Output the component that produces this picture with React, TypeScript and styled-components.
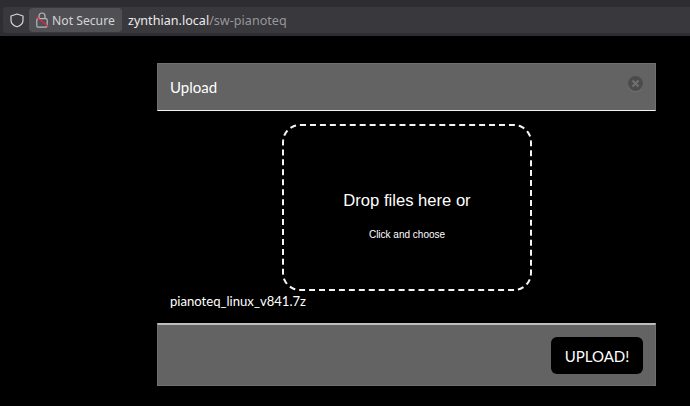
import { createGlobalStyle } from "styled-components";
import styled from "styled-components";

const GlobalStyle = createGlobalStyle`
  html, body {
    margin: 0;
    padding: 0;
    width: 690px;
    height: 406px;
    overflow: hidden;
    background: #000;
  }
`;

const Page = styled.div`
  width: 690px;
  height: 406px;
  display: flex;
  flex-direction: column;
  background: #000;
`;

const BrowserBar = styled.div`
  height: 36px;
  box-sizing: border-box;
  padding: 7px 0 3px 3px;
  background: #2e2d31;
  display: flex;
`;

const UrlBar = styled.div`
  flex: 1;
  display: flex;
  align-items: center;
  padding-left: 7px;
  background: #39383c;
  border-radius: 3px 0 0 3px;
  font-family: "Noto Sans", sans-serif;
  font-size: 12.6px;
`;

const SecurityBadge = styled.div`
  width: 93px;
  height: 24px;
  box-sizing: border-box;
  margin: 0 6px 0 4px;
  display: flex;
  align-items: center;
  padding-left: 7px;
  background: #505054;
  border-radius: 4px;
  color: #d4d4d6;
  font-size: 12.2px;
`;

const Host = styled.span`
  color: #ecebed;
`;

const Path = styled.span`
  color: #97969b;
`;

const Modal = styled.div`
  width: 499px;
  margin: 27px 0 0 157px;
  display: flex;
  flex-direction: column;
  font-family: Lato, sans-serif;
  color: #fff;
`;

const Header = styled.div`
  height: 48px;
  box-sizing: border-box;
  padding: 0 12px;
  display: flex;
  align-items: center;
  justify-content: space-between;
  background: #636363;
  border-top: 1px solid #707070;
  border-left: 1px solid #707070;
  border-right: 1px solid #707070;
  border-bottom: 1px solid #f2f2f2;
  font-size: 15px;
`;

const CloseButton = styled.div`
  width: 15px;
  height: 15px;
  margin: 0 0 8px;
  border-radius: 50%;
  background: #4b4b4b;
  box-shadow: 0 1px 0 #727272;
  display: flex;
  align-items: center;
  justify-content: center;
`;

const Body = styled.div`
  height: 212px;
  box-sizing: border-box;
  padding-top: 13px;
  display: flex;
  flex-direction: column;
`;

const DropZone = styled.div`
  width: 250px;
  height: 167px;
  box-sizing: border-box;
  margin-left: 125px;
  padding-top: 65px;
  border: 2px dashed #f4f4f4;
  border-radius: 18px;
  display: flex;
  flex-direction: column;
  align-items: center;
  font-family: "Liberation Sans", sans-serif;
`;

const DropTitle = styled.div`
  font-size: 16.6px;
  line-height: 20px;
`;

const DropHint = styled.div`
  margin-top: 17px;
  font-size: 10px;
  line-height: 14px;
`;

const FileName = styled.div`
  margin: 2px 0 0 13px;
  font-size: 13.1px;
  line-height: 16px;
`;

const Footer = styled.div`
  height: 63px;
  box-sizing: border-box;
  padding: 12px 12px 0 0;
  display: flex;
  justify-content: flex-end;
  align-items: flex-start;
  background: #636363;
  border-top: 2px solid #bdbdbd;
  border-left: 1px solid #707070;
  border-right: 1px solid #707070;
  border-bottom: 1px solid #707070;
`;

const UploadButton = styled.button`
  width: 92px;
  height: 37px;
  padding: 0;
  border: 0;
  border-radius: 6px;
  background: #000;
  color: #fff;
  font-family: Lato, sans-serif;
  font-size: 15px;
`;

function ShieldIcon() {
  return (
    <svg width="15" height="15" viewBox="0 0 15 15" fill="none">
      <path
        d="M7 1 13 3v4.2c0 3-2.4 5.4-6 6.6C3.4 12.6 1 10.2 1 7.2V3z"
        stroke="#d8d8da"
        strokeWidth="1.2"
        strokeLinejoin="round"
      />
    </svg>
  );
}

function BrokenLockIcon() {
  return (
    <svg width="16" height="16" viewBox="0 0 16 16" fill="none">
      <path d="M3 6.6V4a3 3 0 0 1 6 0v2.600" stroke="#b8b8ba" strokeWidth="1.2" />
      <rect x="0.8" y="6.6" width="10.4" height="8.600" rx="1.5" stroke="#b8b8ba" strokeWidth="1.2" />
      <path d="M0.5 5 12.500 14.500" stroke="#e0274f" strokeWidth="1.2" />
    </svg>
  );
}

function CloseIcon() {
  return (
    <svg width="9" height="9" viewBox="0 0 9 9">
      <path d="M1.5 1.5 7.5 7.5M7.5 1.5 1.5 7.5" stroke="#6f6f6f" strokeWidth="2.2" />
    </svg>
  );
}

export default function App() {
  return (
    <Page>
      <GlobalStyle />
      <BrowserBar>
        <UrlBar>
          <ShieldIcon />
          <SecurityBadge>
            <BrokenLockIcon />
            Not Secure
          </SecurityBadge>
          <div>
            <Host>zynthian.local</Host>
            <Path>/sw-pianoteq</Path>
          </div>
        </UrlBar>
      </BrowserBar>
      <Modal>
        <Header>
          Upload
          <CloseButton>
            <CloseIcon />
          </CloseButton>
        </Header>
        <Body>
          <DropZone>
            <DropTitle>Drop files here or</DropTitle>
            <DropHint>Click and choose</DropHint>
          </DropZone>
          <FileName>pianoteq_linux_v841.7z</FileName>
        </Body>
        <Footer>
          <UploadButton>UPLOAD!</UploadButton>
        </Footer>
      </Modal>
    </Page>
  );
}
